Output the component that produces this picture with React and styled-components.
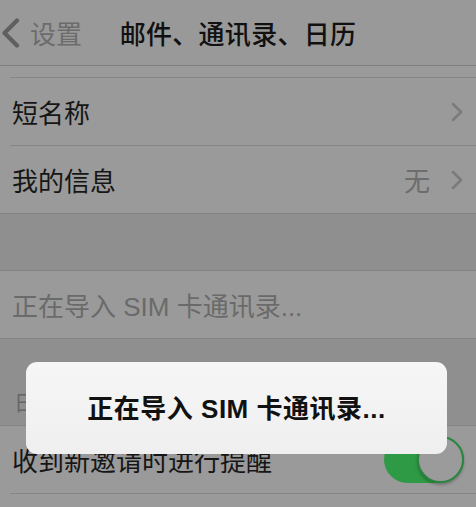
import React from 'react';
import styled, { createGlobalStyle } from 'styled-components';

const GlobalStyle = createGlobalStyle`
  html, body {
    margin: 0;
    padding: 0;
    background: #8f8f8f;
  }
  body {
    font-family: 'Liberation Sans', 'Noto Sans CJK SC', sans-serif;
    -webkit-font-smoothing: antialiased;
  }
`;

const Screen = styled.div`
  position: relative;
  width: 476px;
  height: 507px;
  overflow: hidden;
  background: #8f8f8f;
`;

const NavBar = styled.header`
  height: 65px;
  display: grid;
  grid-template-columns: 1fr auto 1fr;
  align-items: center;
  background: #999999;
  border-bottom: 1px solid #7e7e7e;
`;

const BackButton = styled.div`
  display: flex;
  align-items: center;
  gap: 10px;
  padding-left: 1px;
  color: #6c6c6c;
  font-size: 26px;
`;

const NavTitle = styled.h1`
  margin: 0;
  font-size: 26px;
  font-weight: 500;
  color: #111111;
  letter-spacing: 0.3px;
`;

const Group = styled.section`
  background: #9a9a9a;
  border-top: ${(p) => (p.$flushTop ? 'none' : '1px solid #838383')};
  border-bottom: ${(p) => (p.$open ? 'none' : '1px solid #838383')};
`;

const Row = styled.div`
  padding-left: 10px;
`;

const RowInner = styled.div`
  height: ${(p) => p.$height || 67}px;
  display: flex;
  align-items: center;
  justify-content: space-between;
  padding: 0 13px 0 2px;
  border-bottom: ${(p) => (p.$last ? 'none' : '1px solid #868686')};
`;

const Label = styled.span`
  font-size: 26px;
  color: ${(p) => (p.$muted ? '#6a6a6a' : '#161616')};
  white-space: nowrap;
`;

const Accessory = styled.div`
  display: flex;
  align-items: center;
  gap: 21px;
`;

const Detail = styled.span`
  font-size: 26px;
  color: #6d6d6d;
`;

const Gap = styled.div`
  height: ${(p) => p.$height}px;
  background: #8f8f8f;
`;

const SectionHeader = styled.div`
  height: 86px;
  display: flex;
  align-items: flex-end;
  box-sizing: border-box;
  padding: 0 0 12px 14px;
  font-size: 21px;
  line-height: 21px;
  color: #666666;
`;

const Switch = styled.div`
  width: 80px;
  height: 47px;
  box-sizing: border-box;
  border-radius: 24px;
  background: #2f9a45;
  display: flex;
  justify-content: ${(p) => (p.$on ? 'flex-end' : 'flex-start')};
  margin-right: -1px;
`;

const Knob = styled.div`
  width: 47px;
  height: 47px;
  box-sizing: border-box;
  border-radius: 50%;
  background: #9b9b9b;
  border: 2px solid #2c8540;
  box-shadow: 0 2px 3px rgba(0, 0, 0, 0.25);
`;

const Alert = styled.div`
  position: absolute;
  left: 26px;
  top: 362px;
  width: 421px;
  height: 92px;
  border-radius: 11px;
  background: linear-gradient(180deg, #f6f6f6 0%, #efefef 100%);
  display: flex;
  align-items: center;
  justify-content: center;
  padding-bottom: 4px;
  box-sizing: border-box;
`;

const AlertTitle = styled.div`
  font-size: 26px;
  font-weight: 700;
  color: #111111;
  letter-spacing: 0.5px;
`;

const BackChevron = () => (
  <svg width="19" height="30" viewBox="0 0 19 30" fill="none">
    <polyline
      points="16,2.5 3.5,15 16,27.5"
      stroke="#5f5f5f"
      strokeWidth="4.2"
      strokeLinecap="round"
      strokeLinejoin="round"
    />
  </svg>
);

const Chevron = () => (
  <svg width="12" height="20" viewBox="0 0 12 20" fill="none">
    <polyline
      points="2,2 10,10 2,18"
      stroke="#7b7b7b"
      strokeWidth="2.6"
      strokeLinecap="round"
      strokeLinejoin="round"
    />
  </svg>
);

const App = () => (
  <>
    <GlobalStyle />
    <Screen>
      <NavBar>
        <BackButton>
          <BackChevron />
          设置
        </BackButton>
        <NavTitle>邮件、通讯录、日历</NavTitle>
        <div />
      </NavBar>

      <Group $flushTop>
        <Row>
          <RowInner $height={11} />
        </Row>
        <Row>
          <RowInner>
            <Label>短名称</Label>
            <Chevron />
          </RowInner>
        </Row>
        <Row>
          <RowInner $last>
            <Label>我的信息</Label>
            <Accessory>
              <Detail>无</Detail>
              <Chevron />
            </Accessory>
          </RowInner>
        </Row>
      </Group>

      <Gap $height={56} />

      <Group>
        <Row>
          <RowInner $last>
            <Label $muted>正在导入 SIM 卡通讯录...</Label>
          </RowInner>
        </Row>
      </Group>

      <SectionHeader>日历</SectionHeader>

      <Group $open>
        <Row>
          <RowInner>
            <Label>收到新邀请时进行提醒</Label>
            <Switch $on>
              <Knob />
            </Switch>
          </RowInner>
        </Row>
        <Row>
          <RowInner $last />
        </Row>
      </Group>

      <Alert>
        <AlertTitle>正在导入 SIM 卡通讯录...</AlertTitle>
      </Alert>
    </Screen>
  </>
);

export default App;
